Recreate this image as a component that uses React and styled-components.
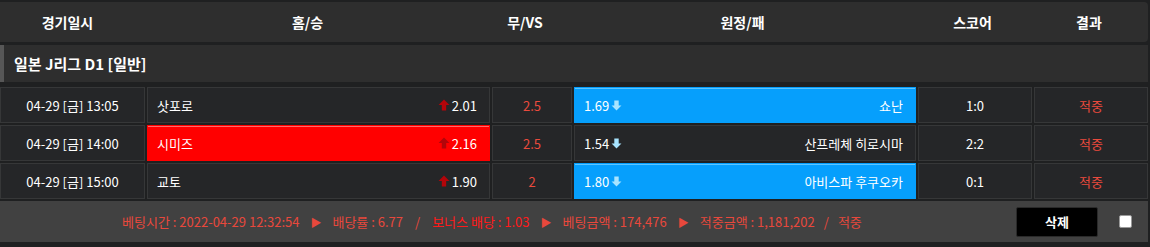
import React from "react"
import styled, { createGlobalStyle } from "styled-components"

const GlobalStyle = createGlobalStyle`
  body {
    margin: 0;
    background: #1f2021;
    font-family: "Noto Sans CJK KR", "Noto Sans", sans-serif;
    color: #fff;
  }
`

const COLS = "145px 343px 80px 342px 114px 114px"

const Wrap = styled.div`
  width: 1148px;
  padding-top: 2px;
  display: flex;
  flex-direction: column;
`

const HeadBar = styled.div`
  display: grid;
  grid-template-columns: 135px 345px 90px 345px 115px 118px;
  height: 40px;
  align-items: center;
  background: #2e2e2e;
  border-radius: 0 4px 4px 0;
  font-size: 14px;
  font-weight: 700;
  text-align: center;
`

const League = styled.div`
  margin-top: 3px;
  height: 37px;
  display: flex;
  align-items: center;
  background: #2e2e2e;
  border-left: 4px solid #575757;
  padding-left: 10px;
  font-size: 15px;
  font-weight: 700;
`

const Rows = styled.div`
  margin-top: 5px;
  display: flex;
  flex-direction: column;
  gap: 2px;
`

const Row = styled.div`
  display: grid;
  grid-template-columns: ${COLS};
  gap: 2px;
  height: 36px;
`

const Cell = styled.div`
  background: #252628;
  border: 1px solid #363738;
  display: flex;
  align-items: center;
  justify-content: center;
  font-size: 13px;
  color: ${(p) => p.$color || "#fff"};
  box-sizing: border-box;
`

const PickCell = styled(Cell)`
  justify-content: space-between;
  padding: 0 12px 0 9px;
  background: ${(p) =>
    p.$pick === "red" ? "#ff0000" : p.$pick === "blue" ? "#069ffc" : "#252628"};
  border-color: ${(p) =>
    p.$pick === "red" ? "#ff0000" : p.$pick === "blue" ? "#069ffc" : "#363738"};
  box-shadow: ${(p) =>
    p.$pick === "red"
      ? "inset 0 1px 0 #ff6a6a"
      : p.$pick === "blue"
      ? "inset 0 1px 0 #5cc4ff"
      : "none"};
`

const Odds = styled.span`
  display: inline-flex;
  align-items: center;
  gap: 2px;
`

const Footer = styled.div`
  margin-top: 2px;
  height: 41px;
  background: #414141;
  display: flex;
  align-items: center;
  padding-left: 122px;
  padding-right: 16px;
`

const Info = styled.div`
  font-size: 13px;
  color: #e8483c;
  white-space: nowrap;
  display: flex;
  align-items: center;
`

const Sep = styled.span`
  margin: 0 ${(p) => p.$gap || 10}px;
  font-size: ${(p) => (p.$tri ? "11px" : "inherit")};
`

const Bonus = styled.span`
  color: #ff1a1a;
`

const DeleteBtn = styled.button`
  margin-left: auto;
  width: 82px;
  height: 30px;
  background: #000;
  border: 1px solid #2a2a2a;
  border-radius: 2px;
  color: #fff;
  font-family: inherit;
  font-size: 13px;
  font-weight: 700;
`

const Check = styled.span`
  margin-left: 21px;
  width: 11px;
  height: 11px;
  background: #fff;
  border: 1px solid #999;
  border-radius: 2px;
`

const Up = () => (
  <svg width="12" height="12" viewBox="0 0 11 11">
    <path d="M5.5 0.5 L10.5 5.5 H7.5 V10.5 H3.5 V5.5 H0.5 Z" fill="#b3050a" />
  </svg>
)

const Down = () => (
  <svg width="11" height="11" viewBox="0 0 10 10">
    <path d="M5 9.5 L0.5 5 H3 V0.5 H7 V5 H9.5 Z" fill="#a8e4ff" />
  </svg>
)

const games = [
  { time: "04-29 [금] 13:05", home: "삿포로", h: "2.01", d: "2.5", a: "1.69", away: "쇼난", score: "1:0", pick: "away" },
  { time: "04-29 [금] 14:00", home: "시미즈", h: "2.16", d: "2.5", a: "1.54", away: "산프레체 히로시마", score: "2:2", pick: "home" },
  { time: "04-29 [금] 15:00", home: "교토", h: "1.90", d: "2", a: "1.80", away: "아비스파 후쿠오카", score: "0:1", pick: "away" },
]

export default function App() {
  return (
    <Wrap>
      <GlobalStyle />
      <HeadBar>
        <span>경기일시</span>
        <span>홈/승</span>
        <span>무/VS</span>
        <span>원정/패</span>
        <span>스코어</span>
        <span>결과</span>
      </HeadBar>
      <League>일본 J리그 D1 [일반]</League>
      <Rows>
        {games.map((g) => (
          <Row key={g.time}>
            <Cell>{g.time}</Cell>
            <PickCell $pick={g.pick === "home" ? "red" : ""}>
              <span>{g.home}</span>
              <Odds>
                <Up />
                {g.h}
              </Odds>
            </PickCell>
            <Cell $color="#ea4a3d">{g.d}</Cell>
            <PickCell $pick={g.pick === "away" ? "blue" : ""}>
              <Odds>
                {g.a}
                <Down />
              </Odds>
              <span>{g.away}</span>
            </PickCell>
            <Cell>{g.score}</Cell>
            <Cell $color="#ea4a3d">적중</Cell>
          </Row>
        ))}
      </Rows>
      <Footer>
        <Info>
          <span>베팅시간 : 2022-04-29 12:32:54</span>
          <Sep $tri $gap={11}>▶</Sep>
          <span>배당률 : 6.77</span>
          <Sep $gap={12}>/</Sep>
          <Bonus>보너스 배당 : 1.03</Bonus>
          <Sep $tri $gap={11}>▶</Sep>
          <span>베팅금액 : 174,476</span>
          <Sep $tri $gap={11}>▶</Sep>
          <span>적중금액 : 1,181,202</span>
          <Sep $gap={9}>/</Sep>
          <span>적중</span>
        </Info>
        <DeleteBtn>삭제</DeleteBtn>
        <Check />
      </Footer>
    </Wrap>
  )
}
